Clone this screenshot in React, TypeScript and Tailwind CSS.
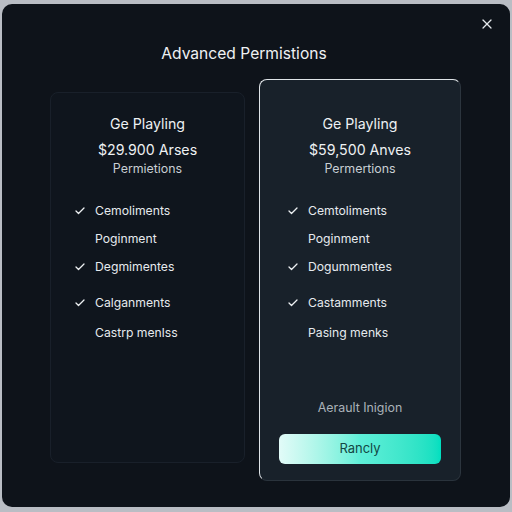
import { Check, X } from "lucide-react";

type Item = { label: string; checked: boolean; mt: string };

const leftItems: Item[] = [
  { label: "Cemoliments", checked: true, mt: "mt-[24px]" },
  { label: "Poginment", checked: false, mt: "mt-[10px]" },
  { label: "Degmimentes", checked: true, mt: "mt-[10px]" },
  { label: "Calganments", checked: true, mt: "mt-[18px]" },
  { label: "Castrp menlss", checked: false, mt: "mt-[12px]" },
];

const rightItems: Item[] = [
  { label: "Cemtoliments", checked: true, mt: "mt-[24px]" },
  { label: "Poginment", checked: false, mt: "mt-[10px]" },
  { label: "Dogummentes", checked: true, mt: "mt-[10px]" },
  { label: "Castamments", checked: true, mt: "mt-[18px]" },
  { label: "Pasing menks", checked: false, mt: "mt-[12px]" },
];

function FeatureList({ items, pad }: { items: Item[]; pad: string }) {
  return (
    <ul className={pad}>
      {items.map((it) => (
        <li key={it.label} className={`${it.mt} flex items-center h-[18px] text-[12.2px] text-[#e6eaee]`}>
          <span className="w-[21px] flex items-center">
            {it.checked && <Check size={12} strokeWidth={2.6} className="text-[#eef1f3]" />}
          </span>
          <span>{it.label}</span>
        </li>
      ))}
    </ul>
  );
}

function PlanHeader({ price, sub }: { price: string; sub: string }) {
  return (
    <div className="flex flex-col items-center">
      <p className="text-[14.2px] leading-[20px] text-[#eef1f3]">Ge Playling</p>
      <p className="mt-[6px] text-[14.2px] leading-[20px] text-[#eef1f3]">{price}</p>
      <p className="text-[12.4px] leading-[18px] text-[#c9cfd4]">{sub}</p>
    </div>
  );
}

export default function App() {
  return (
    <div
      className="w-[512px] h-[512px] bg-[#b9bdc4] pt-[4px] px-[2px] pb-[5px]"
      style={{ fontFamily: "Inter, 'Noto Sans', sans-serif" }}
    >
      <div className="relative h-full rounded-[10px] bg-[#0e131a] px-[48px] pt-[39px]">
        <button className="absolute right-[15px] top-[12px] text-[#e4e8eb]">
          <X size={16} strokeWidth={1.8} />
        </button>

        <h1 className="pr-[24px] text-center text-[15.6px] leading-[22px] text-[#eef1f3]">Advanced Permistions</h1>

        <div className="mt-[14px] grid grid-cols-[195px_202px] gap-[14px]">
          {/* basic plan */}
          <div className="mt-[13px] mb-[18px] rounded-[8px] border border-[#19202a] bg-[#0f151d] pt-[21px]">
            <PlanHeader price="$29.900 Arses" sub="Permietions" />
            <FeatureList items={leftItems} pad="pl-[23px]" />
          </div>

          {/* highlighted plan */}
          <div className="rounded-[8px] border-[1.5px] border-t-[#dfe4e8] border-l-[#dfe4e8] border-r-[#2c353e] border-b-[#2a333c] bg-[#18212a] pt-[34px] pb-[16px] px-[19px]">
            <PlanHeader price="$59,500 Anves" sub="Permertions" />
            <FeatureList items={rightItems} pad="pl-[8px]" />
            <p className="mt-[57px] text-center text-[12.4px] leading-[18px] text-[#aab2b9]">Aerault Inigion</p>
            <button className="mt-[17px] w-full h-[30px] rounded-[6px] bg-linear-to-r from-[#e2fbf8] via-[#5eefd8] to-[#00dfc0] text-[13px] text-[#134744]">
              Rancly
            </button>
          </div>
        </div>
      </div>
    </div>
  );
}
